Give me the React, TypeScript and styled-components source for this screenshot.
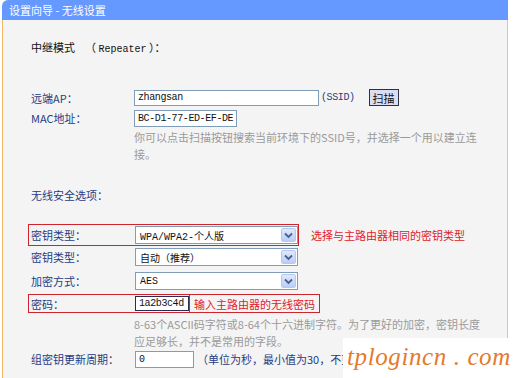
import React from "react";
import styled, { createGlobalStyle } from "styled-components";

const Global = createGlobalStyle`
  html, body { margin: 0; padding: 0; background: #ffffff; overflow: hidden; }
  body { font-family: "Noto Sans CJK SC", "Liberation Sans", sans-serif; }
`;

const Page = styled.div`
  position: relative;
  width: 519px;
  height: 378px;
  overflow: hidden;
`;

const Panel = styled.div`
  margin-left: 2px;
  width: 506px;
  display: flex;
  flex-direction: column;
`;

const Header = styled.div`
  height: 20px;
  background: #6699ff;
  border-top-left-radius: 6px;
  color: #ffffff;
  font-size: 11px;
  line-height: 20px;
  padding-left: 7px;
  white-space: pre;
`;

const Body = styled.div`
  height: 358px;
  background: #f4f4f4;
  border-left: 1px solid #f3b76a;
  border-right: 1px solid #f3c07e;
  display: flex;
  flex-direction: column;
  box-sizing: border-box;
`;

const Row = styled.div<{ $h: number; $mt: number }>`
  display: flex;
  align-items: center;
  height: ${(p) => p.$h}px;
  margin-top: ${(p) => p.$mt}px;
  padding-left: 25px;
`;

const Field = styled.div<{ $boxed?: boolean }>`
  display: flex;
  align-items: center;
  align-self: stretch;
  box-sizing: border-box;
  border: 1px solid ${(p) => (p.$boxed ? "#d0242c" : "transparent")};
  padding-left: 2px;
`;

const Label = styled.span<{ $w?: number; $dark?: boolean }>`
  width: ${(p) => (p.$w ? `${p.$w}px` : "auto")};
  flex: none;
  font-size: 11px;
  color: ${(p) => (p.$dark ? "#111111" : "#1f3c84")};
  white-space: nowrap;
`;

const Mono = styled.span`
  font-family: "Liberation Mono", "Noto Sans CJK SC", monospace;
  font-size: 10px;
`;

const ModeNote = styled.span`
  margin-left: 10px;
  font-size: 11px;
  color: #111111;
  white-space: pre;
`;

const TextBox = styled.input<{ $w: number; $h: number; $dark?: boolean; $ml?: number }>`
  box-sizing: border-box;
  width: ${(p) => p.$w}px;
  height: ${(p) => p.$h}px;
  margin: 0 0 0 ${(p) => p.$ml ?? 0}px;
  padding: 0 0 0 3px;
  border: 1px solid ${(p) => (p.$dark ? "#2a2a55" : "#7f9db9")};
  background: #ffffff;
  font-family: "Liberation Mono", monospace;
  font-size: 10px;
  letter-spacing: -0.4px;
  color: #111111;
  outline: none;
`;

const Ssid = styled.span`
  margin-left: 2px;
  font-family: "Liberation Mono", monospace;
  font-size: 10px;
  letter-spacing: -0.4px;
  color: #1f3c84;
`;

const ScanButton = styled.button`
  box-sizing: border-box;
  margin-left: 14px;
  width: 30px;
  height: 17px;
  padding: 0;
  border: 1px solid #2f2f3f;
  background: #d9ddf6;
  font-family: "Noto Sans CJK SC", sans-serif;
  font-size: 11px;
  line-height: 14px;
  color: #111111;
`;

const Hint = styled.div<{ $mt: number }>`
  margin-top: ${(p) => p.$mt}px;
  margin-left: 131px;
  display: flex;
  flex-direction: column;
`;

const HintLine = styled.span`
  height: 17px;
  line-height: 17px;
  font-size: 11px;
  color: #9a9a9a;
  white-space: nowrap;
`;

const SelectBox = styled.div`
  box-sizing: border-box;
  width: 163px;
  height: 18px;
  margin-left: 1px;
  border: 1px solid #7f9db9;
  background: #ffffff;
  display: flex;
  align-items: center;
  justify-content: space-between;
  padding-left: 4px;
`;

const SelectText = styled.span`
  font-family: "Liberation Mono", "Noto Sans CJK SC", monospace;
  font-size: 10px;
  color: #111111;
  white-space: nowrap;
`;

const ArrowButton = styled.span`
  box-sizing: border-box;
  width: 15px;
  height: 14px;
  margin-right: 1px;
  border: 1px solid #b7c8f0;
  border-radius: 2px;
  background: linear-gradient(#dfe8fd, #b9cdf8);
  display: flex;
  align-items: center;
  justify-content: center;
`;

const RedNote = styled.span<{ $boxed?: boolean }>`
  margin-left: ${(p) => (p.$boxed ? 0 : 8)}px;
  align-self: stretch;
  display: flex;
  align-items: center;
  box-sizing: border-box;
  padding: 0 4px;
  border: 1px solid ${(p) => (p.$boxed ? "#d0242c" : "transparent")};
  border-left: none;
  font-size: 11px;
  color: #e0202a;
  white-space: nowrap;
`;

const Unit = styled.span`
  margin-left: 3px;
  font-size: 11px;
  color: #1f3c84;
  white-space: nowrap;
`;

const Watermark = styled.div`
  position: absolute;
  left: 343px;
  top: 338px;
  width: 176px;
  height: 40px;
  background: #ffffff;
  font-family: "Liberation Serif", serif;
  font-style: italic;
  font-size: 25px;
  letter-spacing: 0.6px;
  color: #e57a2b;
  line-height: 38px;
  padding-left: 4px;
  box-sizing: border-box;
  white-space: pre;
`;

const Chevron = () => (
  <svg width="9" height="7" viewBox="0 0 9 7">
    <path d="M1 1.5 L4.5 5 L8 1.5" fill="none" stroke="#4b5f8c" strokeWidth="1.8" />
  </svg>
);

const Select = ({ value }: { value: string }) => (
  <SelectBox>
    <SelectText>{value}</SelectText>
    <ArrowButton>
      <Chevron />
    </ArrowButton>
  </SelectBox>
);

export default function App() {
  return (
    <Page>
      <Global />
      <Panel>
        <Header>设置向导 - 无线设置</Header>
        <Body>
          <Row $h={18} $mt={18}>
            <Field>
              <Label $dark>中继模式</Label>
              <ModeNote>
                （ <Mono>Repeater</Mono> ）：
              </ModeNote>
            </Field>
          </Row>

          <Row $h={17} $mt={33}>
            <Field>
              <Label $w={103}>远端AP：</Label>
              <TextBox $w={185} $h={16} defaultValue="zhangsan" readOnly />
              <Ssid>(SSID)</Ssid>
              <ScanButton>扫描</ScanButton>
            </Field>
          </Row>

          <Row $h={18} $mt={3}>
            <Field>
              <Label $w={103}>MAC地址：</Label>
              <TextBox $w={103} $h={17} defaultValue="BC-D1-77-ED-EF-DE" readOnly />
            </Field>
          </Row>

          <Hint $mt={2}>
            <HintLine>你可以点击扫描按钮搜索当前环境下的SSID号，并选择一个用以建立连</HintLine>
            <HintLine>接。</HintLine>
          </Hint>

          <Row $h={18} $mt={23}>
            <Field>
              <Label>无线安全选项：</Label>
            </Field>
          </Row>

          <Row $h={22} $mt={20}>
            <Field $boxed>
              <Label $w={103}>密钥类型：</Label>
              <Select value="WPA/WPA2-个人版" />
            </Field>
            <RedNote>选择与主路由器相同的密钥类型</RedNote>
          </Row>

          <Row $h={18} $mt={2}>
            <Field>
              <Label $w={103}>密钥类型：</Label>
              <Select value="自动（推荐）" />
            </Field>
          </Row>

          <Row $h={18} $mt={6}>
            <Field>
              <Label $w={103}>加密方式：</Label>
              <Select value="AES" />
            </Field>
          </Row>

          <Row $h={19} $mt={4}>
            <Field $boxed>
              <Label $w={103}>密码：</Label>
              <TextBox $w={54} $h={15} $ml={1} $dark defaultValue="1a2b3c4d" readOnly />
            </Field>
            <RedNote $boxed>输入主路由器的无线密码</RedNote>
          </Row>

          <Hint $mt={3}>
            <HintLine>8-63个ASCII码字符或8-64个十六进制字符。为了更好的加密，密钥长度</HintLine>
            <HintLine>应足够长，并不是常用的字段。</HintLine>
          </Hint>

          <Row $h={18} $mt={0}>
            <Field>
              <Label $w={103}>组密钥更新周期：</Label>
              <TextBox $w={59} $h={17} $ml={1} defaultValue="0" readOnly />
              <Unit>（单位为秒，最小值为30，不更新则为0）</Unit>
            </Field>
          </Row>
        </Body>
      </Panel>
      <Watermark>tplogincn . com</Watermark>
    </Page>
  );
}
